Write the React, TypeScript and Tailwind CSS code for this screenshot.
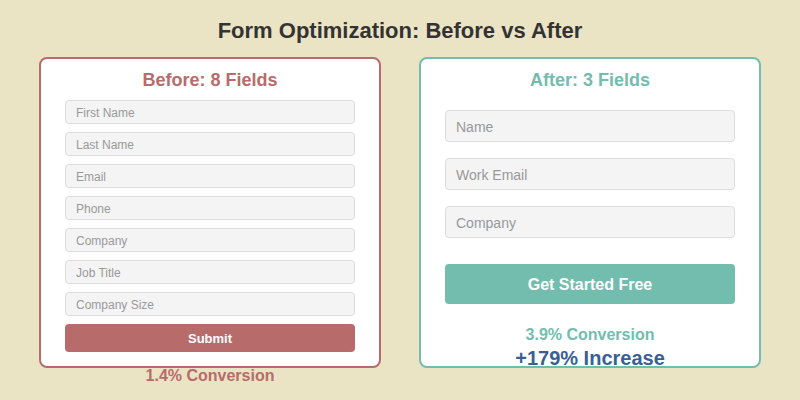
const before = ["First Name", "Last Name", "Email", "Phone", "Company", "Job Title", "Company Size"];
const after = ["Name", "Work Email", "Company"];

function Field({ label, big = false }: { label: string; big?: boolean }) {
  return (
    <input
      readOnly
      placeholder={label}
      className={`w-full rounded border-[1.5px] border-[#dcdcdc] bg-[#f4f4f4] px-[10px] pt-[2px] font-['Liberation_Sans',Arial,sans-serif] outline-none placeholder:text-[#999] ${
        big ? "h-[32px] text-[14px]" : "h-[24px] text-[12px]"
      }`}
    />
  );
}

export default function App() {
  return (
    <div className="h-[400px] w-[800px] overflow-hidden bg-[#ebe4c4] pt-[18px] font-['Liberation_Sans',Arial,sans-serif]">
      <h1 className="text-center text-[22px] font-bold leading-[26px] text-[#333]">
        Form Optimization: Before vs After
      </h1>

      <div className="mt-[13px] flex gap-[38px] px-[39px]">
        {/* before */}
        <div className="h-[311px] w-[342px] rounded-lg border-2 border-[#b86b6b] bg-white px-[24px] pt-[11px]">
          <h2 className="text-center text-[18px] font-bold leading-[20px] text-[#b86b6b]">Before: 8 Fields</h2>
          <div className="mt-[10px] flex flex-col gap-[8px]">
            {before.map((f) => (
              <Field key={f} label={f} />
            ))}
            <button className="h-[28px] w-full rounded bg-[#b86b6b] pt-[2px] text-[13px] font-bold text-white">Submit</button>
          </div>
          <p className="mt-[14px] text-center text-[16px] font-bold leading-[20px] text-[#b86b6b]">1.4% Conversion</p>
        </div>

        {/* after */}
        <div className="h-[311px] w-[342px] rounded-lg border-2 border-[#72bdae] bg-white px-[24px] pt-[11px]">
          <h2 className="text-center text-[18px] font-bold leading-[20px] text-[#72bdae]">After: 3 Fields</h2>
          <div className="mt-[20px] flex flex-col gap-[16px]">
            {after.map((f) => (
              <Field key={f} label={f} big />
            ))}
          </div>
          <button className="mt-[26px] h-[40px] w-full rounded bg-[#72bdae] pt-[2px] text-[16px] font-bold text-white">
            Get Started Free
          </button>
          <p className="mt-[21px] text-center text-[16px] font-bold leading-[20px] text-[#72bdae]">3.9% Conversion</p>
          <p className="mt-[1px] text-center text-[20px] font-bold leading-[24px] text-[#3b5f94]">+179% Increase</p>
        </div>
      </div>
    </div>
  );
}
